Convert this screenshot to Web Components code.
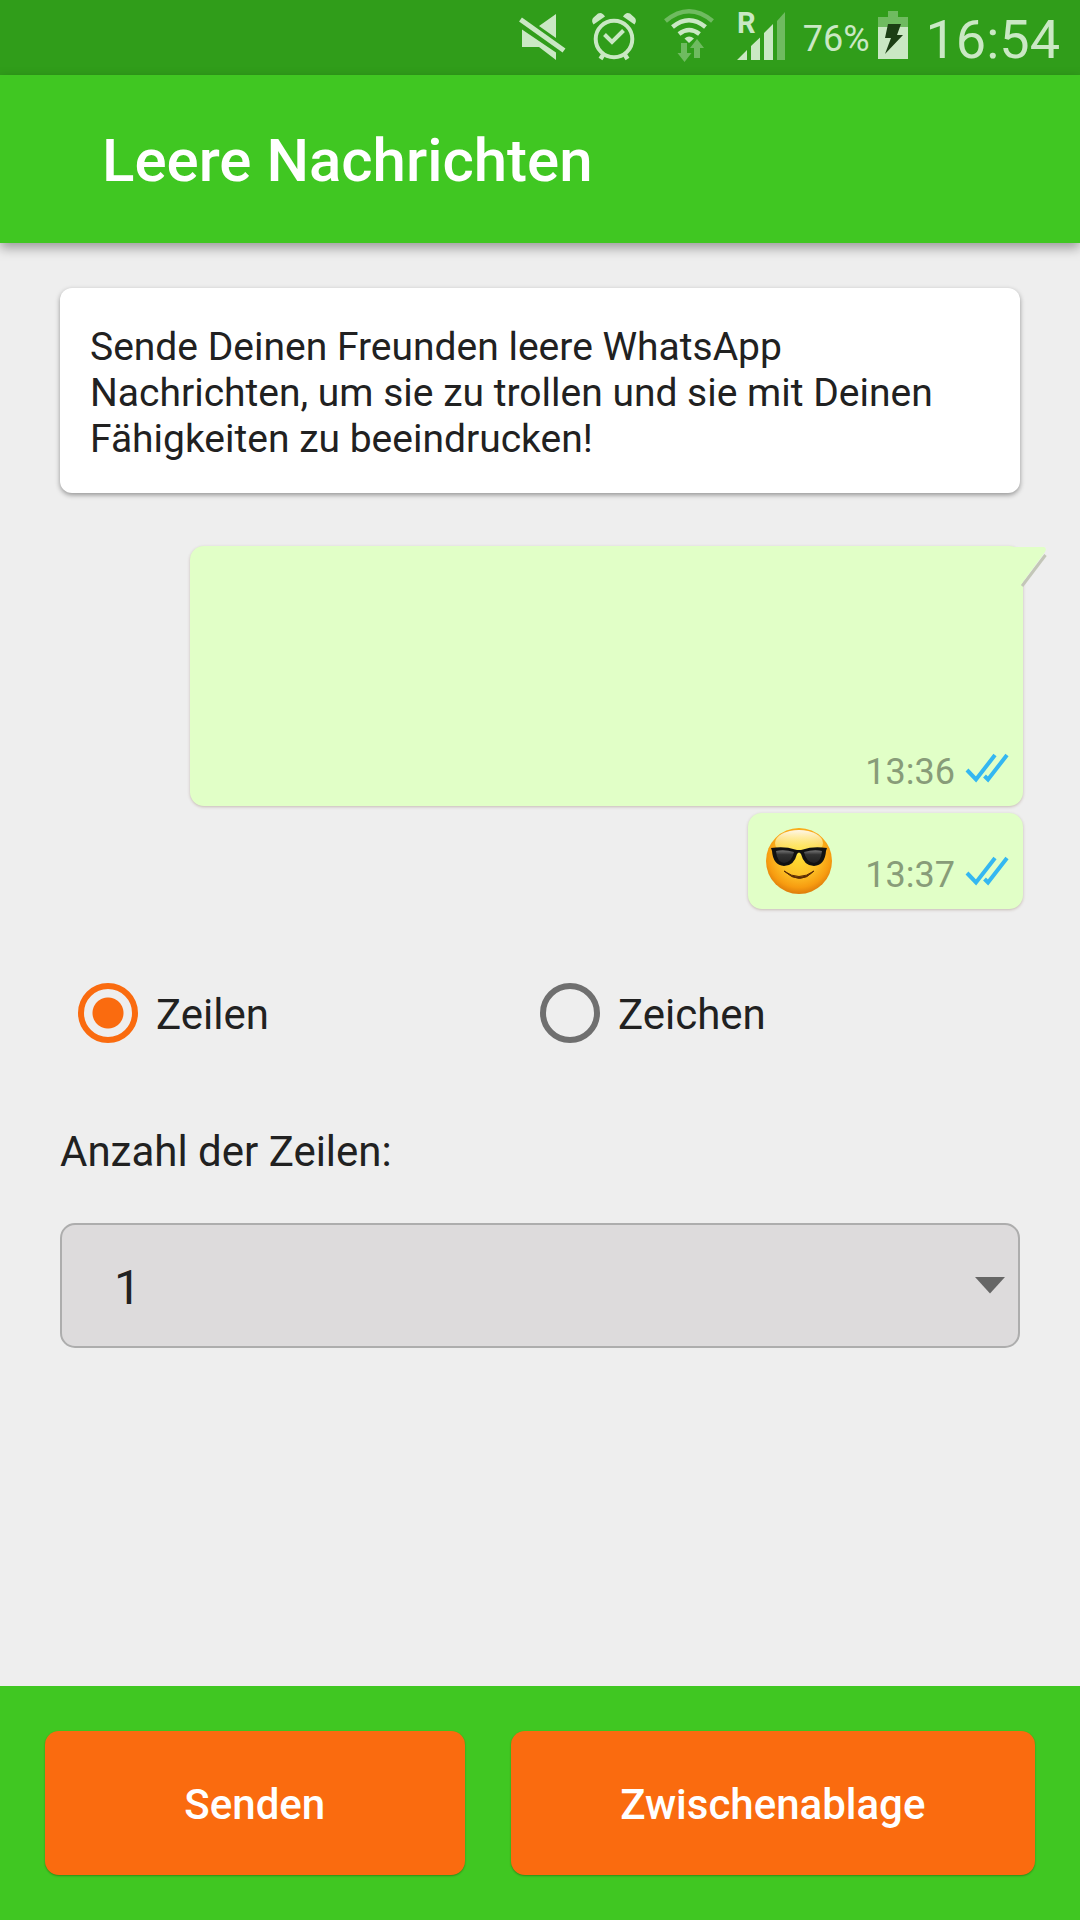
<!DOCTYPE html>
<html lang="de">
<head>
<meta charset="utf-8">
<meta name="viewport" content="width=device-width, initial-scale=1">
<title>Leere Nachrichten</title>
<style>
  html, body { margin: 0; }
  body {
    min-height: 100vh;
    display: flex;
    flex-direction: column;
    background: #eee;
    color: #212121;
    font: 400 42px/49px Roboto, "Liberation Sans", sans-serif;
    --green: #40c722;
    --orange: #fa6b0f;
  }
  main {
    flex: 1;
    display: flex;
    flex-direction: column;
    padding: 45px 60px;
  }
</style>
</head>
<body>
<status-bar></status-bar>
<app-bar>Leere Nachrichten</app-bar>
<main>
  <info-card>Sende Deinen Freunden leere WhatsApp Nachrichten, um sie zu trollen und sie mit Deinen Fähigkeiten zu beeindrucken!</info-card>
  <chat-preview>
    <chat-bubble time="13:36" first></chat-bubble>
    <chat-bubble time="13:37"><cool-emoji></cool-emoji></chat-bubble>
  </chat-preview>
  <mode-choice></mode-choice>
  <count-picker></count-picker>
</main>
<action-bar>
  <action-button style="flex: 4">Senden</action-button>
  <action-button style="flex: 5">Zwischenablage</action-button>
</action-bar>

<script>
const define = (name, html, setup) => customElements.define(name, class extends HTMLElement {
  connectedCallback() {
    if (this.shadowRoot) return;
    this.attachShadow({ mode: "open" }).innerHTML = html;
    if (setup) setup(this, this.shadowRoot);
  }
});

define("status-bar", `
<style>
  :host {
    display: flex; justify-content: flex-end; align-items: center;
    height: 75px; padding-right: 20px; background: #309d1a; color: #cae8c4;
  }
  svg { height: 75px; flex: none; fill: #cae8c4; }
  .dim { fill: #6fbb60; }
  .percent { font-size: 36px; line-height: 42px; padding: 2px 0 0 9px; }
  time { font-size: 54px; line-height: 64px; padding-top: 4px; }
</style>
<svg width="68" viewBox="510 0 68 75" aria-label="Stumm">
  <path d="M556 14v24l-17-12zM522 29.500l34 23v7.500l-17-13h-17z"/>
  <path d="M520.500 19.500l43.500 31" stroke="#cae8c4" stroke-width="5"/>
</svg>
<svg width="72" viewBox="578 0 72 75" aria-label="Wecker">
  <g fill="none" stroke="#cae8c4">
    <circle cx="614" cy="39" r="18.300" stroke-width="4"/>
    <path d="M604.500 34.500l7.500 7.500 11.500-11.500" stroke-width="4"/>
    <path d="M603 55l-2.500 4M625 55l2.500 4" stroke-width="4.500"/>
  </g>
  <path d="M605 16.500q-3-5-7-3l-5 4.500q-2 3 .5 6.500zM623 16.500q3-5 7-3l5 4.500q2 3-.5 6.500z"/>
</svg>
<svg width="76" viewBox="650 0 76 75" aria-label="WLAN">
  <g fill="none" stroke="#cae8c4" stroke-width="4.500">
    <path d="M665.500 21q23.500-19.500 47 0" stroke="#6fbb60"/>
    <path d="M672.500 27q16.500-13.500 33 0"/>
    <path d="M679 34q10-8 20.500 0"/>
  </g>
  <path d="M684.500 38.500q4.500-4 9.500 0l-5 4.500z"/>
  <path class="dim" d="M681 43h6v10h4.500l-7 9-7-9h3.500zM697 39l7 9h-4v10h-6v-10h-4z"/>
</svg>
<svg width="68" viewBox="726 0 68 75" aria-label="Roaming">
  <text x="737" y="33" font-size="29" font-weight="700">R</text>
  <path d="M737 60l10-10v10zM751 60v-14l9-8.500v22.500zM764 60v-27l9-9v36z"/>
  <path class="dim" d="M777 60v-39l8-9v48z"/>
</svg>
<span class="percent">76%</span>
<svg width="56" viewBox="870 0 56 75" aria-label="Akku lädt">
  <path class="dim" d="M878 27v-10h10v-6h10v6h10v10z"/>
  <path d="M878 27h30v32h-30z"/>
  <path d="M888 24h13l-4 11h6l-18 19 6-16h-6z" fill="#1c3f15"/>
</svg>
<time>16:54</time>`);

define("app-bar", `
<style>
  :host {
    display: flex; align-items: center; height: 168px; padding: 0 102px;
    background: var(--green); color: #fff; box-shadow: 0 5px 11px rgba(0,0,0,.35);
  }
  h1 { margin: 0; padding-top: 4px; font-size: 60px; line-height: 70px; font-weight: 500; }
</style>
<h1><slot></slot></h1>`);

define("info-card", `
<style>
  :host {
    display: block; padding: 36px 30px 31px; border-radius: 12px; background: #fff;
    font-size: 39px; line-height: 46px; box-shadow: 0 2px 5px rgba(0,0,0,.38);
  }
  p { margin: 0; }
</style>
<p><slot></slot></p>`);

define("chat-preview", `
<style>
  :host {
    display: flex; flex-direction: column; align-items: flex-end; gap: 7px;
    margin: 53px -3px 0 130px;
  }
</style>
<slot></slot>`);

define("chat-bubble", `
<style>
  :host {
    position: relative; box-sizing: border-box;
    display: flex; align-items: flex-end; justify-content: flex-end;
    padding: 13px 14px 13px 16px; border-radius: 14px; background: #e1ffc7;
    box-shadow: 0 1px 3px rgba(110,70,50,.3);
  }
  :host([first]) { width: 100%; height: 260px; }
  :host(:not([first])) .tail { display: none; }
  .tail { position: absolute; left: 100%; top: 0; margin-left: -14px; }
  time { font-size: 36px; line-height: 42px; color: #889c79; }
  .ticks { margin-left: 10px; }
</style>
<svg class="tail" width="40" height="44" aria-hidden="true">
  <path d="M13 40L36.500 9" stroke="#c3c6b8" stroke-width="3"/>
  <path d="M0 1h35q3 1 1 5L11 40H0z" fill="#e1ffc7"/>
</svg>
<slot></slot>
<time></time>
<svg class="ticks" width="44" height="42" fill="none" stroke="#34b7f1" stroke-width="4" aria-label="Gelesen">
  <path d="M2 19l9 9.500L30 4M19.500 25l3.500 3.500L42 4"/>
</svg>`, (host, root) => {
  root.querySelector("time").textContent = host.getAttribute("time");
});

define("cool-emoji", `
<style>
  :host { display: block; margin-right: 31px; }
  svg { display: block; }
</style>
<svg width="70" height="70" viewBox="0 0 70 70" role="img" aria-label="Gesicht mit Sonnenbrille">
  <defs>
    <radialGradient id="face" cx=".5" cy=".42" r=".6">
      <stop offset="0" stop-color="#ffdf35"/><stop offset=".5" stop-color="#fdc127"/>
      <stop offset=".8" stop-color="#f79c10"/><stop offset="1" stop-color="#d9760a"/>
    </radialGradient>
    <linearGradient id="shine" x2="0" y2="1">
      <stop offset="0" stop-color="#fff" stop-opacity=".9"/><stop offset="1" stop-color="#fff04a" stop-opacity=".35"/>
    </linearGradient>
    <linearGradient id="lens" x2="0" y2="1">
      <stop offset="0" stop-color="#777"/><stop offset=".35" stop-color="#333"/><stop offset="1" stop-color="#222"/>
    </linearGradient>
  </defs>
  <circle cx="35" cy="35" r="33" fill="url(#face)"/>
  <ellipse cx="35" cy="17" rx="24" ry="13" fill="url(#shine)"/>
  <path d="M7 22q14-2 24 1.500 4 1 8 0Q49 20 63 22l-1 3q-1 14-12 15-10 0-13-12-2-3-4 0-3 12-13 12Q9 39 8 25z" fill="#111"/>
  <path d="M12 25q8-2 18 1-2 10-10 11-7-1-8-12zM58 25q-8-2-18 1 2 10 10 11 7-1 8-12z" fill="url(#lens)"/>
  <path d="M20 45q15 11 30 0-14 15-30 0z" fill="#5b2c05" stroke="#5b2c05" stroke-linejoin="round"/>
</svg>`);

define("mode-choice", `
<style>
  :host { display: block; margin-top: 74px; }
  fieldset {
    display: grid; grid-template-columns: 1fr 1fr;
    margin: 0; padding: 0 18px; border: 0; min-width: 0;
  }
  label { display: flex; align-items: center; gap: 18px; }
  span { padding-top: 3px; }
  input {
    appearance: none; flex: none; width: 60px; height: 60px; margin: 0;
    border: 6px solid #6f6f6f; border-radius: 50%;
  }
  input:checked {
    border-color: var(--orange);
    background: radial-gradient(circle, var(--orange) 15px, transparent 16px);
  }
</style>
<fieldset aria-label="Einheit">
  <label><input type="radio" name="mode" value="lines" checked><span>Zeilen</span></label>
  <label><input type="radio" name="mode" value="chars"><span>Zeichen</span></label>
</fieldset>`);

define("count-picker", `
<style>
  :host { display: flex; flex-direction: column; gap: 47px; margin-top: 84px; }
  .box { display: grid; align-items: center; }
  select, svg { grid-area: 1 / 1; }
  select {
    appearance: none; width: 100%; height: 125px; margin: 0; padding: 3px 52px 0;
    border: 2px solid #adadad; border-radius: 15px; background: #dddbdc;
    color: inherit; font: inherit; font-size: 48px;
  }
  svg { justify-self: end; margin-right: 15px; fill: #666; pointer-events: none; }
</style>
<label for="count">Anzahl der Zeilen:</label>
<div class="box">
  <select id="count"><option>1</option><option>2</option><option>3</option><option>4</option><option>5</option></select>
  <svg width="30" height="17" aria-hidden="true"><path d="M0 0h30L15 16.500z"/></svg>
</div>`);

define("action-bar", `
<style>
  :host { display: flex; gap: 46px; padding: 45px; background: var(--green); }
</style>
<slot></slot>`);

define("action-button", `
<style>
  :host { display: block; min-width: 0; }
  button {
    display: block; width: 100%; height: 144px; margin: 0; padding: 3px 0 0;
    border: 0; border-radius: 14px; background: var(--orange); color: #fff;
    font: inherit; font-weight: 500; box-shadow: 0 1px 2px rgba(0,0,0,.3);
  }
</style>
<button type="button"><slot></slot></button>`);
</script>
</body>
</html>
